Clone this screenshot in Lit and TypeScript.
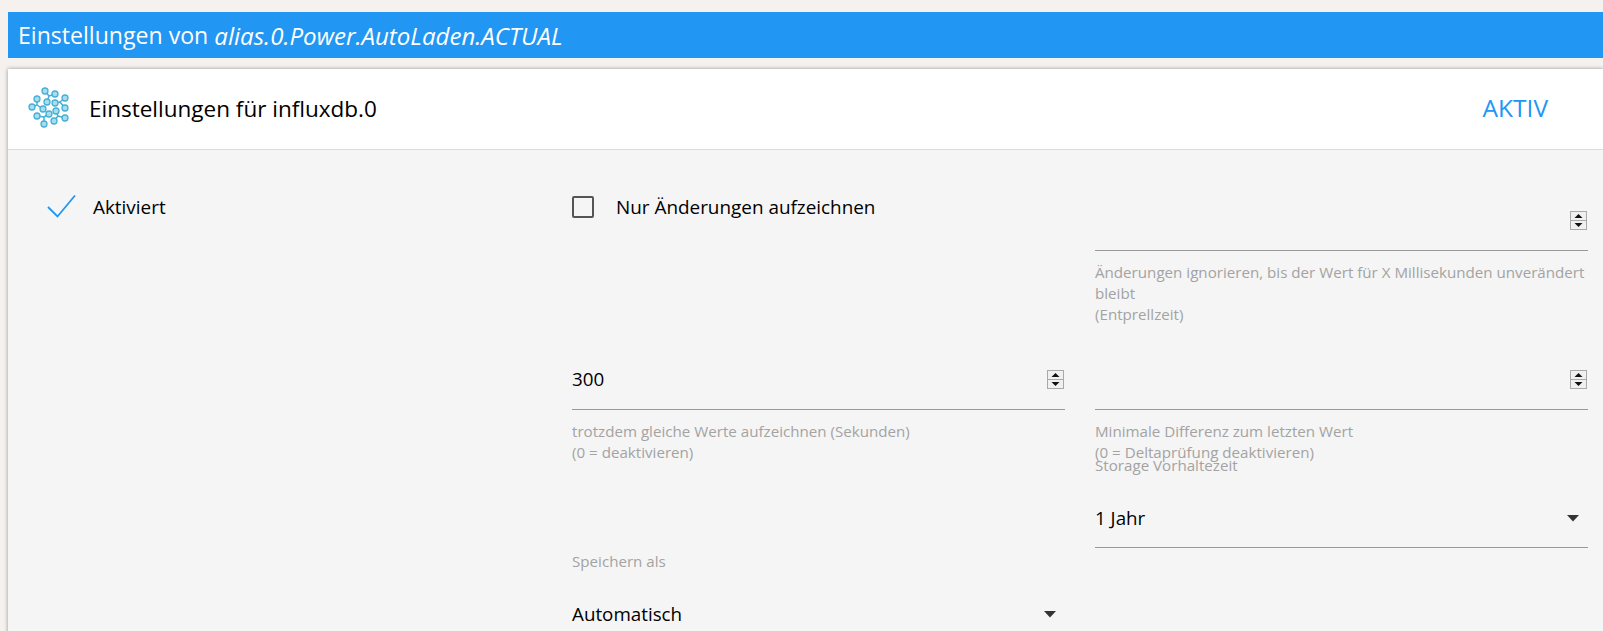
import { LitElement, html, css, svg } from "lit";
import { customElement } from "lit/decorators.js";

const clusters = [
  { c: [29, 17], n: [[25, 12], [35, 15], [27, 23]] },
  { c: [40, 23], n: [[45, 19], [45, 29], [35, 24]] },
  { c: [17, 26], n: [[17, 20], [12, 28], [23, 30]] },
  { c: [38, 37], n: [[36, 32], [45, 39], [34, 42]] },
  { c: [24, 38], n: [[17, 37], [29, 35], [24, 45]] },
];

const spinner = html`<svg class="spin" width="17" height="19" viewBox="0 0 17 19">
  <rect x=".5" y=".5" width="16" height="18" fill="#f0f0f0" stroke="#a9a9a9"/>
  <path d="M1 9.5h15" stroke="#a9a9a9"/>
  <path d="M8.5 3l4 4h-8zM8.5 16l-4-4h8z" fill="#111"/>
</svg>`;

const arrow = html`<svg class="arrow" width="14" height="7" viewBox="0 0 14 7"><path d="M1 0h12l-6 6.5z" fill="#333"/></svg>`;

@customElement("app-root")
export class AppRoot extends LitElement {
  static styles = css`
    :host { display: block; height: 631px; overflow: hidden; background: #f5f1ee; font-family: "Open Sans", "Noto Sans", sans-serif; color: #000; }
    .page { padding: 12px 0 0 8px; }
    .bar { height: 46px; background: #2196f3; color: #fff; display: flex; align-items: center; padding-left: 10px; font-size: 23.1px; white-space: pre; }
    .bar i { font-style: italic; font-size: 24.1px; }
    .card { margin-top: 11px; background: #f5f5f5; box-shadow: 0 0 4px rgba(0,0,0,.4); height: 600px; }
    .head { height: 80px; background: #fff; border-bottom: 1px solid #ddd; display: flex; align-items: center; padding: 0 55px 0 16px; }
    .head svg { width: 60px; height: 60px; margin: 0 9px 0 -4px; flex: none; }
    .head .t { flex: 1; font-size: 22.5px; margin-top: -2px; }
    .head .a { color: #2196f3; font-size: 24.5px; margin: -4px 0 0 0; }
    .body { display: grid; grid-template-columns: 495px 493px 493px; column-gap: 30px; padding: 41px 0 0 39px; }
    .stack { display: flex; flex-direction: column; }
    .check { display: flex; align-items: center; font-size: 18.9px; height: 31px; }
    .tick { width: 32px; margin-right: 14px; }
    .box { width: 18px; height: 18px; border: 2px solid #555; border-radius: 2px; margin: 0 22px 0 0; flex: none; }
    .cell { flex: none; box-sizing: border-box; }
    .r1 { height: 169px; }
    .r2a { height: 191px; }
    .r2b { height: 95px; }
    .pad { padding-top: 10px; }
    .input { height: 38px; padding-bottom: 11px; border-bottom: 1px solid #999; display: flex; align-items: center; justify-content: space-between; font-size: 18.8px; box-sizing: content-box; }
    .sel { padding-bottom: 10px; }
    .spin { margin: 0 1px 0 auto; display: block; }
    .help { margin-top: 11px; font-size: 15.15px; line-height: 21px; color: #a3a3a3; }
    .label { font-size: 15.15px; line-height: 21px; color: #a3a3a3; margin-bottom: 23px; }
    .arrow { margin-right: 8px; }
  `;

  private icon() {
    return html`<svg viewBox="0 0 60 60" fill="none">
      ${clusters.map(({ c, n }) => svg`
        ${n.map(([x, y]) => svg`<line x1=${c[0]} y1=${c[1]} x2=${x} y2=${y} stroke="#45b0d6" stroke-width="1.5"/>`)}
        ${n.map(([x, y]) => svg`<circle cx=${x} cy=${y} r="3" fill="#a8dcee" stroke="#45b0d6" stroke-width="1.3"/>`)}
      `)}
    </svg>`;
  }

  render() {
    return html`<div class="page">
      <div class="bar">Einstellungen von <i>alias.0.Power.AutoLaden.ACTUAL</i></div>
      <div class="card">
        <div class="head">${this.icon()}<span class="t">Einstellungen für influxdb.0</span><span class="a">AKTIV</span></div>
        <div class="body">
          <div class="stack">
            <div class="check"><svg class="tick" height="26" viewBox="0 0 32 26" fill="none"><path d="M1 13l9.500 9.500L28 1.500" stroke="#2196f3" stroke-width="1.8"/></svg>Aktiviert</div>
          </div>
          <div class="stack">
            <div class="cell r1"><div class="check"><span class="box"></span>Nur Änderungen aufzeichnen</div></div>
            <div class="cell r2a">
              <div class="input"><span>300</span>${spinner}</div>
              <div class="help">trotzdem gleiche Werte aufzeichnen (Sekunden)<br>(0 = deaktivieren)</div>
            </div>
            <div class="cell">
              <div class="label">Speichern als</div>
              <div class="input sel"><span>Automatisch</span>${arrow}</div>
            </div>
          </div>
          <div class="stack">
            <div class="cell r1 pad">
              <div class="input">${spinner}</div>
              <div class="help">Änderungen ignorieren, bis der Wert für X Millisekunden unverändert bleibt<br>(Entprellzeit)</div>
            </div>
            <div class="cell r2b">
              <div class="input">${spinner}</div>
              <div class="help">Minimale Differenz zum letzten Wert<br>(0 = Deltaprüfung deaktivieren)</div>
            </div>
            <div class="cell">
              <div class="label">Storage Vorhaltezeit</div>
              <div class="input sel"><span>1 Jahr</span>${arrow}</div>
            </div>
          </div>
        </div>
      </div>
    </div>`;
  }
}
